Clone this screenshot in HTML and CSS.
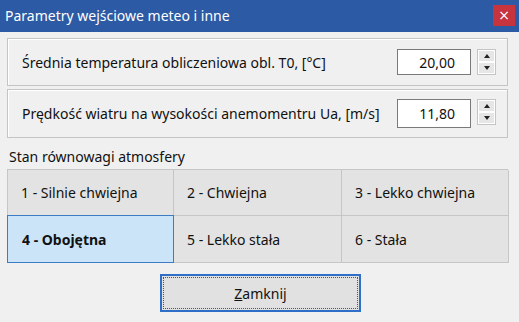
FILE: index.html
```html
<!DOCTYPE html>
<html lang="pl">
<head>
    <meta charset="UTF-8">
    <title>Parametry wejściowe meteo i inne</title>
    <link rel="stylesheet" href="styles.css">
</head>
<body>
    <div class="window">
        <div class="titlebar">
            <span class="title">Parametry wejściowe meteo i inne</span>
            <button type="button" class="close-button">&#215;</button>
        </div>

        <div class="content">
            <div class="param-box">
                <label for="t0">Średnia temperatura obliczeniowa obl. T0, [°C]</label>
                <div class="spin">
                    <input type="text" id="t0" value="20,00">
                    <div class="spin-buttons">
                        <span class="spin-btn"><span class="arrow-up"></span></span>
                        <span class="spin-btn"><span class="arrow-down"></span></span>
                    </div>
                </div>
            </div>

            <div class="param-box second">
                <label for="ua">Prędkość wiatru na wysokości anemomentru Ua, [m/s]</label>
                <div class="spin">
                    <input type="text" id="ua" value="11,80">
                    <div class="spin-buttons">
                        <span class="spin-btn"><span class="arrow-up"></span></span>
                        <span class="spin-btn"><span class="arrow-down"></span></span>
                    </div>
                </div>
            </div>

            <div class="group-label">Stan równowagi atmosfery</div>

            <div class="stability-grid">
                <div class="cell">1 - Silnie chwiejna</div>
                <div class="cell">2 - Chwiejna</div>
                <div class="cell">3 - Lekko chwiejna</div>
                <div class="cell selected">4 - Obojętna</div>
                <div class="cell">5 - Lekko stała</div>
                <div class="cell">6 - Stała</div>
            </div>

            <div class="footer">
                <button type="button" class="close-dialog"><span><u>Z</u>amknij</span></button>
            </div>
        </div>
    </div>
</body>
</html>
```

FILE: styles.css
```css
body {
    margin: 0;
    padding: 0;
    font-family: 'Noto Sans', 'Open Sans', sans-serif;
    font-size: 14px;
    color: #111;
    background-color: #f0f0f0;
}

.window {
    width: 519px;
    height: 322px;
    background-color: #f0f0f0;
}

.titlebar {
    height: 32px;
    background-color: #2c5aa4;
    display: flex;
    align-items: center;
    justify-content: space-between;
    padding: 0 4px 0 5px;
    box-sizing: border-box;
}

.title {
    color: #fff;
    font-size: 14px;
    margin-top: -1px;
}

.close-button {
    width: 22px;
    height: 21px;
    margin-top: -1px;
    background-color: #c7343d;
    color: #fff;
    border: none;
    font-family: 'DejaVu Sans', sans-serif;
    font-size: 14px;
    line-height: 21px;
    padding: 0;
}

.content {
    padding: 6px 11px 0 7px;
}

.param-box {
    height: 48px;
    border: 1px solid #c4c4c4;
    box-shadow: inset 1px 1px 0 #fff;
    display: flex;
    align-items: center;
    justify-content: space-between;
    padding: 0 11px 0 14px;
    box-sizing: border-box;
}

.param-box.second {
    height: 49px;
    margin-top: 3px;
}

.spin {
    display: flex;
    align-items: flex-start;
    gap: 6px;
}

.spin input {
    width: 74px;
    height: 26px;
    box-sizing: border-box;
    border: 1px solid #7a7a7a;
    background: #fff;
    text-align: right;
    padding: 0 15px 0 4px;
    font-family: 'Noto Sans', 'Open Sans', sans-serif;
    font-size: 14px;
    color: #111;
}

.second .spin input {
    height: 29px;
}

.spin-buttons {
    display: flex;
    flex-direction: column;
    width: 19px;
    height: 26px;
    border: 1px solid #c4c4c4;
    box-sizing: border-box;
    background: #fff;
}

.spin-btn {
    flex: 1;
    display: flex;
    align-items: center;
    justify-content: center;
    background-color: #e6e6e6;
    border: 1px solid #fff;
}

.arrow-up {
    border-left: 3px solid transparent;
    border-right: 3px solid transparent;
    border-bottom: 4px solid #222;
}

.arrow-down {
    border-left: 3px solid transparent;
    border-right: 3px solid transparent;
    border-top: 4px solid #222;
}

.group-label {
    margin: 7px 0 0 2px;
    height: 24px;
    line-height: 24px;
}

.stability-grid {
    display: grid;
    grid-template-columns: 166px 168px 167px;
    grid-template-rows: 46px 47px;
    border-top: 1px solid #c6c6c6;
    border-left: 1px solid #c6c6c6;
}

.cell {
    background-color: #e3e3e3;
    border-right: 1px solid #c6c6c6;
    border-bottom: 1px solid #c6c6c6;
    display: flex;
    align-items: center;
    padding-left: 13px;
}

.cell.selected {
    background-color: #cce4f7;
    border: 1px solid #3b7cc4;
    margin: -1px 0 0 -1px;
    padding-left: 14px;
    font-weight: bold;
}

.footer {
    display: flex;
    justify-content: center;
    padding: 11px 0 0 6px;
}

.close-dialog {
    width: 201px;
    height: 38px;
    background-color: #e1e1e1;
    border: 2px solid #2f6fc7;
    padding: 1px;
    font-family: 'Noto Sans', 'Open Sans', sans-serif;
    font-size: 14px;
    color: #111;
}

.close-dialog span {
    display: flex;
    align-items: center;
    justify-content: center;
    height: 100%;
    border: 1px dotted #555;
    box-sizing: border-box;
}
```
